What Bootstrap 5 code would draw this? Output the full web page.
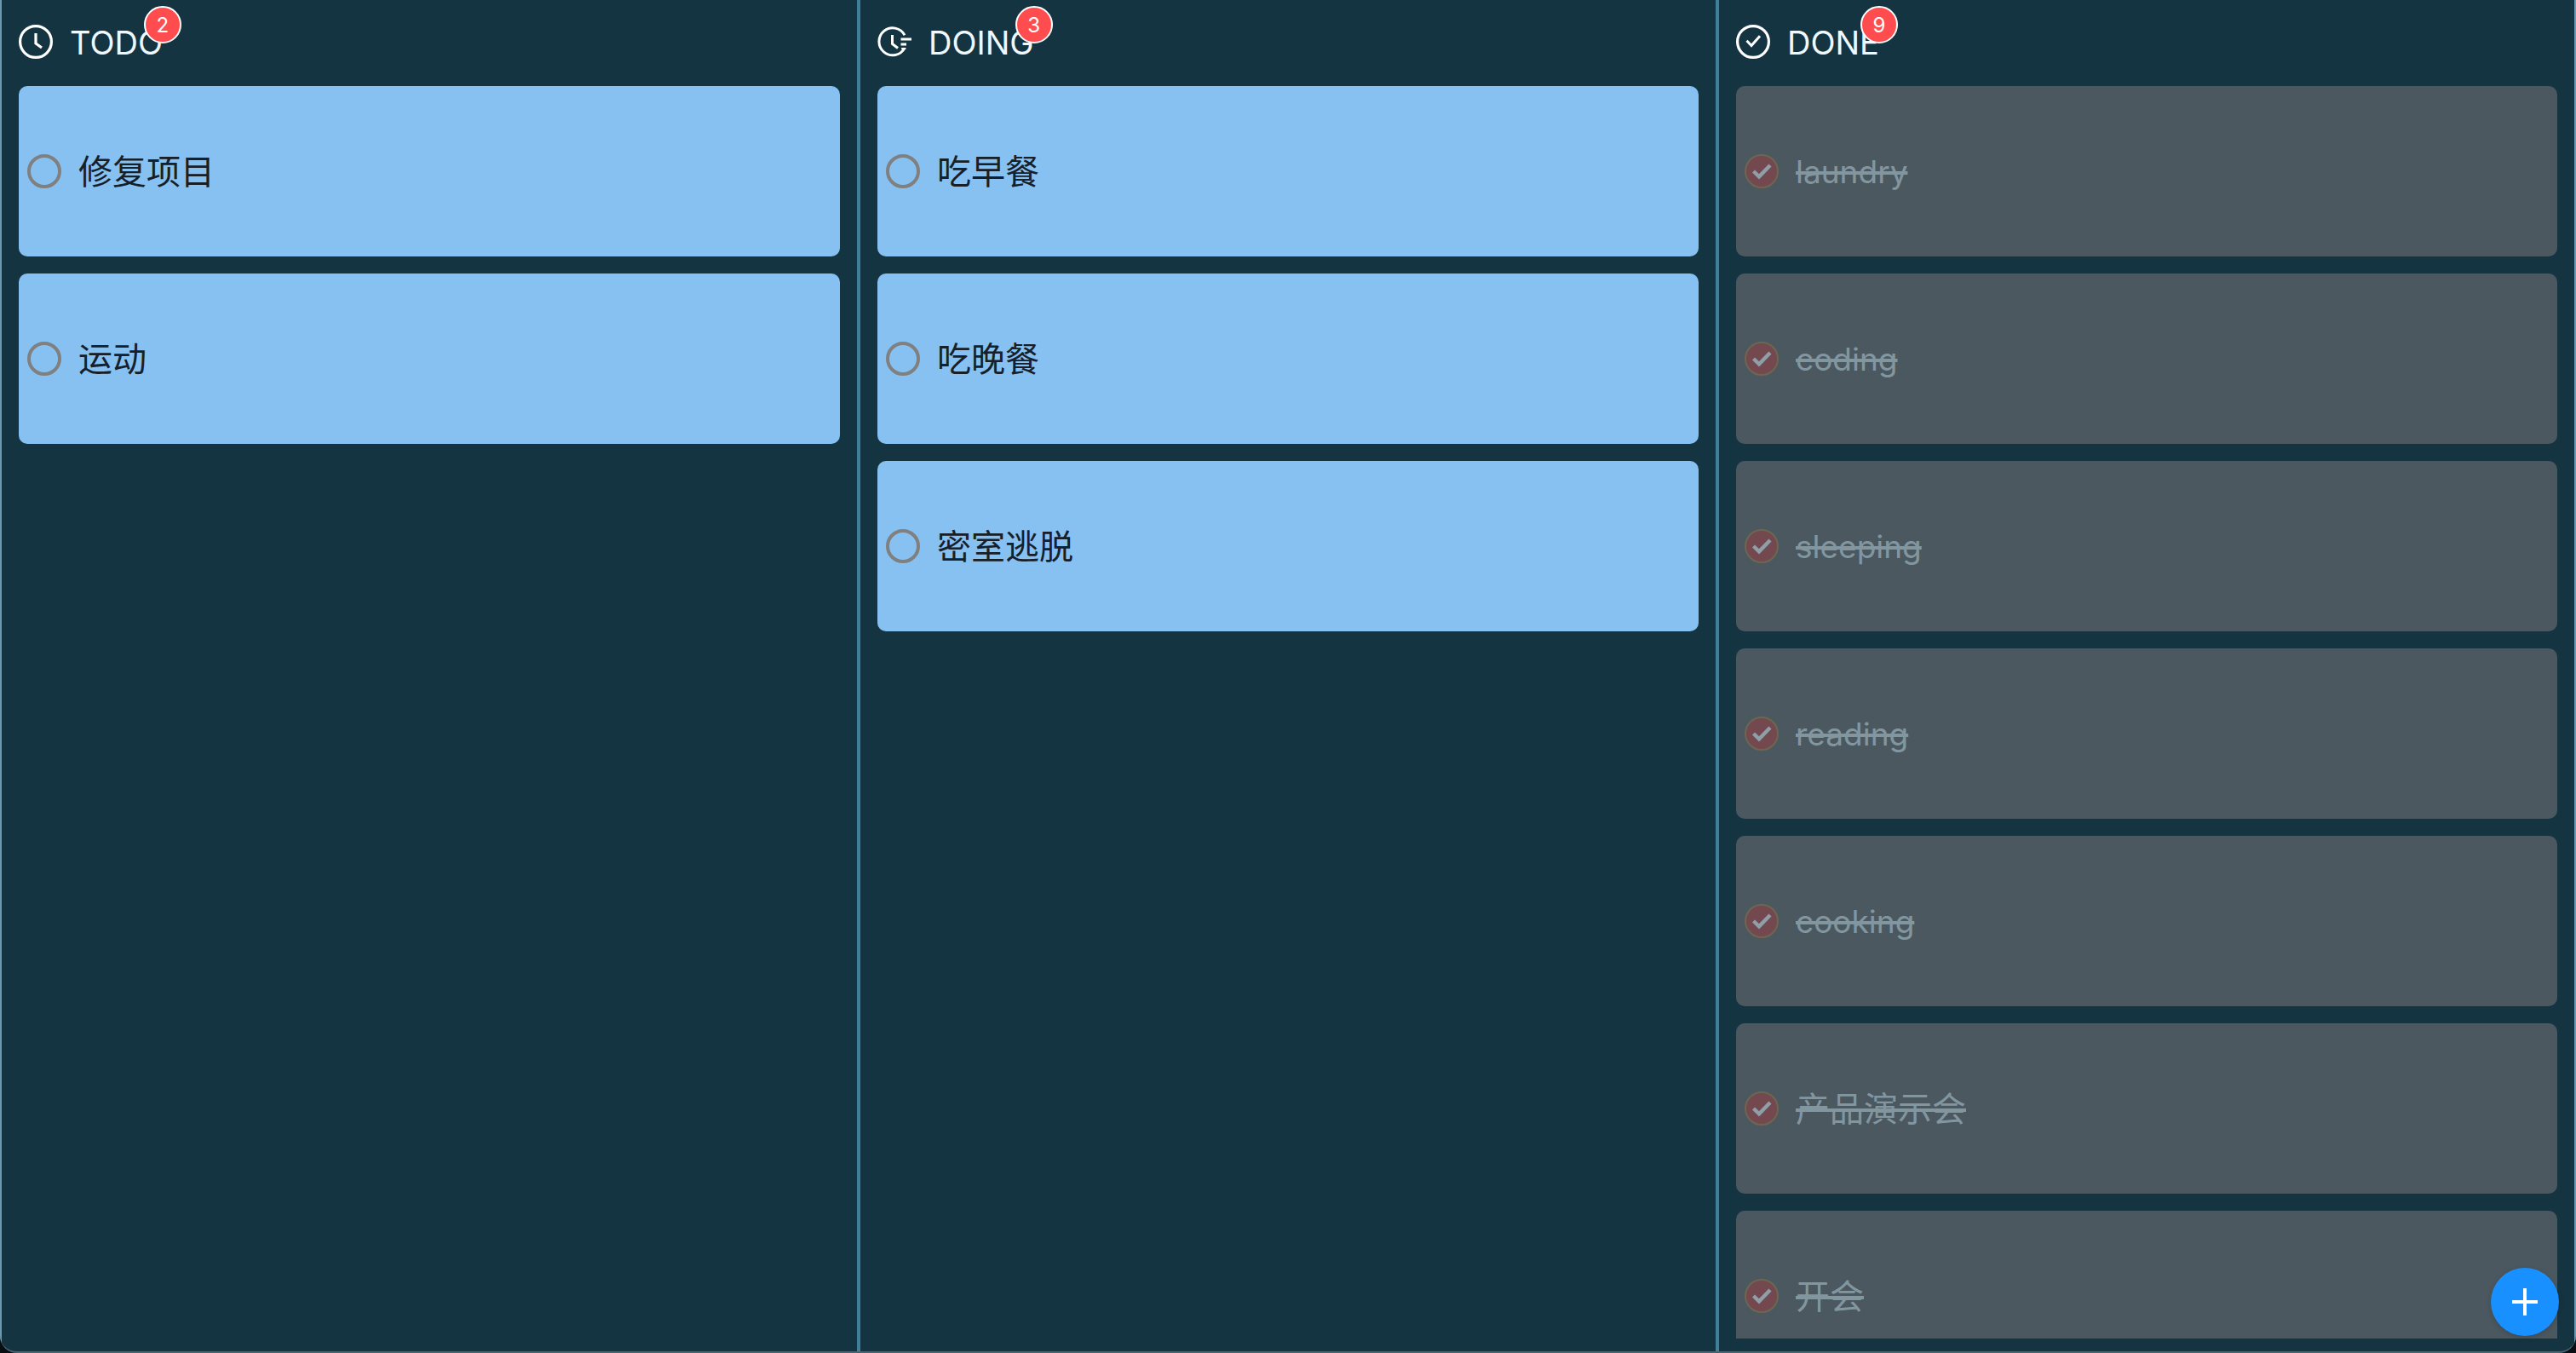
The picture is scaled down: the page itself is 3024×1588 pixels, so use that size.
<!DOCTYPE html>
<html lang="zh-CN">
<head>
<meta charset="utf-8">
<meta name="viewport" content="width=device-width, initial-scale=1">
<title>Todo board</title>
<link href="https://cdn.jsdelivr.net/npm/bootstrap@5.3.0/dist/css/bootstrap.min.css" rel="stylesheet">
<style>
  body { background: #0a0d12; font-family: Inter, "Noto Sans CJK SC", sans-serif; font-size: 37px; line-height: 40px; }
  .board { background: #153442; border-bottom: 2px solid #4b6470; border-radius: 0 0 20px 20px; }
  .lane { padding: 29px 20px 15px; min-width: 0; flex: 1 1 0; border: solid #407f9c; border-width: 0 2px; }
  .lane:first-child { border-left-color: #6a9ab2; }
  .lane:last-child { border-right-color: #6a9ab2; }
  .lane-head { gap: 20px; margin-bottom: 32px; color: #fff; }
  .lane-title { height: 40px; font-size: 38px; line-height: 42px; font-weight: 400; color: #f0f8ff; }
  .lane-icon { width: 40px; height: 40px; fill: none; stroke: currentColor; stroke-width: 3.2; }
  .count { width: 44px; height: 44px; border: 2px solid #fff; background: #ff4d4f; color: #fff; font-size: 24px; line-height: 42px; }
  .tasks { gap: 20px; }
  .task { height: 200px; gap: 20px; padding: 0 10px; border-radius: 10px; background: #87c1f1; color: #16202a; }
  .task label { padding-top: 2px; }
  .task :lang(zh) { font-size: 40px; }
  .tick { appearance: none; width: 40px; height: 40px; margin: 0; border: 4px solid #808080; border-radius: 50%; }
  .task.is-done { background: #4b5860; color: #8296a0; }
  .is-done label { text-decoration: line-through; text-decoration-thickness: 4px; }
  .tick:checked { border: 2px solid #6d6650; background: #74484f url("data:image/svg+xml,%3Csvg xmlns='http://www.w3.org/2000/svg' viewBox='0 0 36 36'%3E%3Cpath d='M8.5 18L15 24.3L28 11' fill='none' stroke='%238e9fa8' stroke-width='4.4'/%3E%3C/svg%3E") center / 36px; }
  .fab { width: 80px; height: 80px; right: 20px; bottom: 20px; border: 0; background: #1890ff; color: #fff; box-shadow: 0 2px 6px rgba(0,0,0,.15); }
  .fab svg { width: 32px; height: 32px; }
</style>
</head>
<body>
<main class="board d-flex vh-100 overflow-hidden">
  <section class="lane d-flex flex-column">
    <header class="lane-head d-flex align-items-center">
      <svg class="lane-icon" viewBox="0 0 40 40" aria-hidden="true"><circle cx="20" cy="20" r="18.4"/><path d="M20 10V22L27 27"/></svg>
      <h2 class="lane-title position-relative mb-0">TODO<span class="count position-absolute top-0 start-100 translate-middle rounded-circle text-center">2</span></h2>
    </header>
    <ul class="tasks list-unstyled d-flex flex-column flex-grow-1 overflow-hidden mb-0">
      <li class="task d-flex align-items-center flex-shrink-0"><input class="tick flex-shrink-0" type="checkbox" id="t1"><label for="t1" lang="zh">修复项目</label></li>
      <li class="task d-flex align-items-center flex-shrink-0"><input class="tick flex-shrink-0" type="checkbox" id="t2"><label for="t2" lang="zh">运动</label></li>
    </ul>
  </section>
  <section class="lane d-flex flex-column">
    <header class="lane-head d-flex align-items-center">
      <svg class="lane-icon" viewBox="0 0 40 40" aria-hidden="true"><path d="M32 12.2A16 16 0 1 0 32 27.4" stroke-width="3"/><path d="M17.5 12V22.5L24 27.5M27.5 17H40M27.5 23H34" stroke-width="3"/><path d="M28.2 28H33.4" stroke-width="2"/></svg>
      <h2 class="lane-title position-relative mb-0">DOING<span class="count position-absolute top-0 start-100 translate-middle rounded-circle text-center">3</span></h2>
    </header>
    <ul class="tasks list-unstyled d-flex flex-column flex-grow-1 overflow-hidden mb-0">
      <li class="task d-flex align-items-center flex-shrink-0"><input class="tick flex-shrink-0" type="checkbox" id="d1"><label for="d1" lang="zh">吃早餐</label></li>
      <li class="task d-flex align-items-center flex-shrink-0"><input class="tick flex-shrink-0" type="checkbox" id="d2"><label for="d2" lang="zh">吃晚餐</label></li>
      <li class="task d-flex align-items-center flex-shrink-0"><input class="tick flex-shrink-0" type="checkbox" id="d3"><label for="d3" lang="zh">密室逃脱</label></li>
    </ul>
  </section>
  <section class="lane d-flex flex-column">
    <header class="lane-head d-flex align-items-center">
      <svg class="lane-icon" viewBox="0 0 40 40" aria-hidden="true"><circle cx="20" cy="20" r="18.4"/><path d="M12.5 18.8L18 24.5L28 13.2" stroke-width="3"/></svg>
      <h2 class="lane-title position-relative mb-0">DONE<span class="count position-absolute top-0 start-100 translate-middle rounded-circle text-center">9</span></h2>
    </header>
    <ul class="tasks list-unstyled d-flex flex-column flex-grow-1 overflow-hidden mb-0">
      <li class="task is-done d-flex align-items-center flex-shrink-0"><input class="tick flex-shrink-0" type="checkbox" id="f1" checked><label for="f1" lang="en">laundry</label></li>
      <li class="task is-done d-flex align-items-center flex-shrink-0"><input class="tick flex-shrink-0" type="checkbox" id="f2" checked><label for="f2" lang="en">coding</label></li>
      <li class="task is-done d-flex align-items-center flex-shrink-0"><input class="tick flex-shrink-0" type="checkbox" id="f3" checked><label for="f3" lang="en">sleeping</label></li>
      <li class="task is-done d-flex align-items-center flex-shrink-0"><input class="tick flex-shrink-0" type="checkbox" id="f4" checked><label for="f4" lang="en">reading</label></li>
      <li class="task is-done d-flex align-items-center flex-shrink-0"><input class="tick flex-shrink-0" type="checkbox" id="f5" checked><label for="f5" lang="en">cooking</label></li>
      <li class="task is-done d-flex align-items-center flex-shrink-0"><input class="tick flex-shrink-0" type="checkbox" id="f6" checked><label for="f6" lang="zh">产品演示会</label></li>
      <li class="task is-done d-flex align-items-center flex-shrink-0"><input class="tick flex-shrink-0" type="checkbox" id="f7" checked><label for="f7" lang="zh">开会</label></li>
    </ul>
  </section>
</main>
<button type="button" class="fab position-fixed rounded-circle d-flex align-items-center justify-content-center p-0" aria-label="Add task">
  <svg viewBox="0 0 32 32" aria-hidden="true"><path d="M16 0V32M1 16H31" stroke="currentColor" stroke-width="4"/></svg>
</button>
<script src="https://cdn.jsdelivr.net/npm/bootstrap@5.3.0/dist/js/bootstrap.bundle.min.js"></script>
</body>
</html>
